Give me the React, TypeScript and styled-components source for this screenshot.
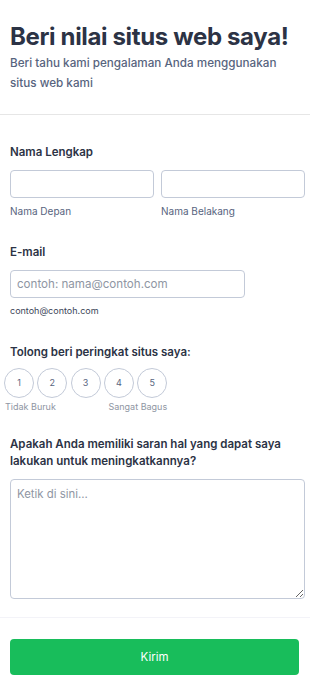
import React from "react";
import styled, { createGlobalStyle } from "styled-components";

const Global = createGlobalStyle`
  html, body { margin: 0; padding: 0; background: #ffffff; }
  body { font-family: Inter, "Noto Sans", Arial, sans-serif; color: #2c3345; }
  * { box-sizing: border-box; }
`;

const Page = styled.div`
  width: 310px;
  background: #fff;
`;

const Header = styled.header`
  padding: 22px 10px 21px;
  border-bottom: 1px solid #e6e6e6;
`;

const Title = styled.h1`
  margin: 0;
  font-size: 24px;
  line-height: 29px;
  font-weight: 700;
  color: #2c3345;
  letter-spacing: -0.35px;
`;

const Subtitle = styled.p`
  margin: 2px 0 0;
  font-size: 11.7px;
  line-height: 20px;
  font-weight: 500;
  color: #57647e;
`;

const Body = styled.div`
  padding: 28px 5px 0 10px;
`;

const Field = styled.div<{ $gap?: number }>`
  margin-bottom: ${(p) => (p.$gap ?? 26)}px;
`;

const Label = styled.div`
  font-size: 11.5px;
  line-height: 18px;
  font-weight: 600;
  color: #2c3345;
  margin-bottom: 9px;
`;

const QuestionLabel = styled(Label)`
  line-height: 17px;
`;

const NameGrid = styled.div`
  display: grid;
  grid-template-columns: 144px 144px;
  column-gap: 7px;
`;

const Input = styled.input<{ $w?: number }>`
  display: block;
  width: ${(p) => (p.$w ? `${p.$w}px` : "100%")};
  height: 28px;
  border: 1px solid #c3cad8;
  border-radius: 4px;
  padding: 0 6px;
  font-family: inherit;
  font-size: 11.6px;
  color: #2c3345;
  background: #fff;
  &::placeholder { color: #8f96a3; }
`;

const SubLabel = styled.div<{ $size?: number; $dark?: boolean }>`
  margin-top: 7px;
  font-size: ${(p) => p.$size ?? 10}px;
  line-height: 12px;
  color: ${(p) => (p.$dark ? "#3b4558" : "#57647e")};
`;

const Rating = styled.div`
  display: inline-flex;
  flex-direction: column;
  margin-left: -6px;
  margin-top: -3px;
`;

const Circles = styled.div`
  display: flex;
  gap: 3.3px;
`;

const Circle = styled.div`
  width: 30px;
  height: 30px;
  border: 1px solid #c3cad8;
  border-radius: 50%;
  display: flex;
  align-items: center;
  justify-content: center;
  font-size: 9px;
  color: #57647e;
`;

const RatingLabels = styled.div`
  display: flex;
  justify-content: space-between;
  margin-top: 3px;
  padding-left: 1px;
  font-size: 9px;
  line-height: 12px;
  color: #8f96a3;
`;

const TextArea = styled.textarea`
  display: block;
  width: 295px;
  height: 120px;
  border: 1px solid #c3cad8;
  border-radius: 4px;
  padding: 5px 6px;
  font-family: inherit;
  font-size: 11.4px;
  line-height: 18px;
  color: #2c3345;
  resize: vertical;
  &::placeholder { color: #8f96a3; }
`;

const Footer = styled.div`
  margin-top: 18px;
  border-top: 1px solid #f3f3f8;
  padding: 21px 11px 22px 10px;
`;

const Button = styled.button`
  display: block;
  width: 100%;
  height: 36px;
  border: none;
  border-radius: 4px;
  background: #18bd5b;
  color: #ffffff;
  font-family: inherit;
  font-size: 11.5px;
  font-weight: 400;
  cursor: pointer;
`;

export default function App() {
  return (
    <Page>
      <Global />
      <Header>
        <Title>Beri nilai situs web saya!</Title>
        <Subtitle>Beri tahu kami pengalaman Anda menggunakan situs web kami</Subtitle>
      </Header>
      <Body>
        <Field>
          <Label>Nama Lengkap</Label>
          <NameGrid>
            <div>
              <Input type="text" />
              <SubLabel>Nama Depan</SubLabel>
            </div>
            <div>
              <Input type="text" />
              <SubLabel>Nama Belakang</SubLabel>
            </div>
          </NameGrid>
        </Field>
        <Field>
          <Label>E-mail</Label>
          <Input type="email" $w={235} placeholder="contoh: nama@contoh.com" />
          <SubLabel $size={9} $dark>contoh@contoh.com</SubLabel>
        </Field>
        <Field $gap={23}>
          <Label>Tolong beri peringkat situs saya:</Label>
          <Rating>
            <Circles>
              {[1, 2, 3, 4, 5].map((n) => (
                <Circle key={n}>{n}</Circle>
              ))}
            </Circles>
            <RatingLabels>
              <span>Tidak Buruk</span>
              <span>Sangat Bagus</span>
            </RatingLabels>
          </Rating>
        </Field>
        <div>
          <QuestionLabel>Apakah Anda memiliki saran hal yang dapat saya lakukan untuk meningkatkannya?</QuestionLabel>
          <TextArea placeholder="Ketik di sini..." />
        </div>
      </Body>
      <Footer>
        <Button type="button">Kirim</Button>
      </Footer>
    </Page>
  );
}
